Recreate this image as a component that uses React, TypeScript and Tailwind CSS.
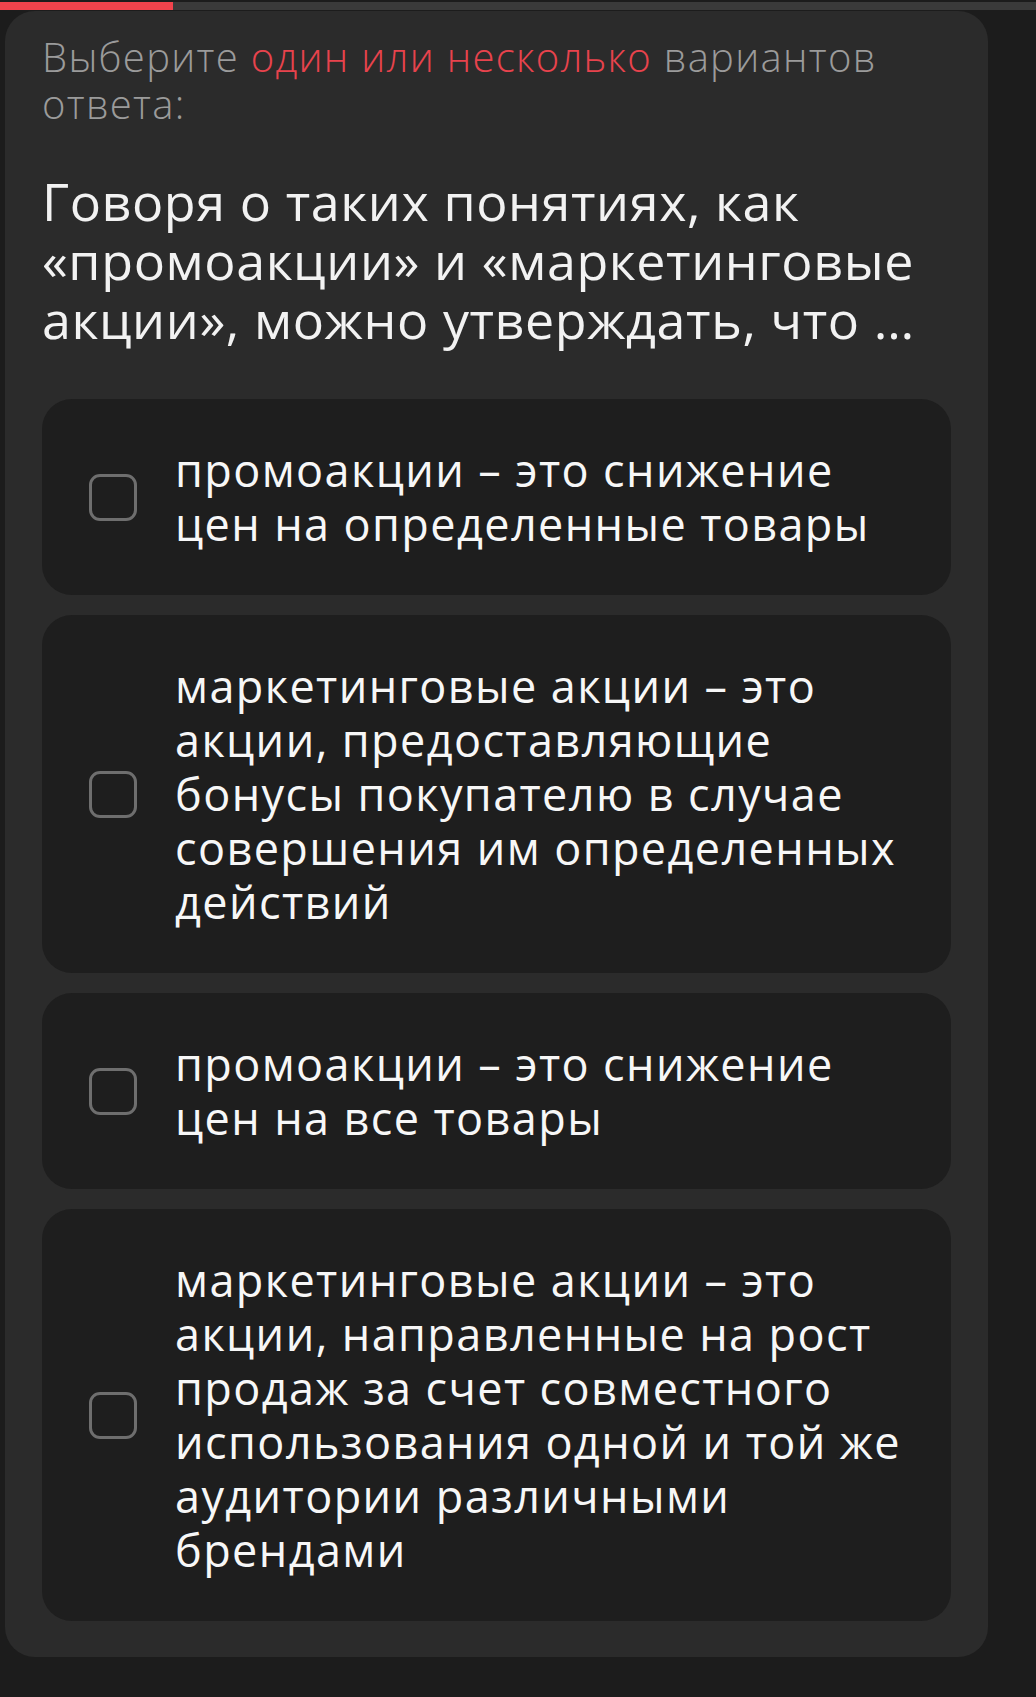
import React from 'react';

const options = [
  'промоакции – это снижение цен на определенные товары',
  'маркетинговые акции – это акции, предоставляющие бонусы покупателю в случае совершения им определенных действий',
  'промоакции – это снижение цен на все товары',
  'маркетинговые акции – это акции, направленные на рост продаж за счет совместного использования одной и той же аудитории различными брендами',
];

const App: React.FC = () => {
  return (
    <div className="min-h-[1697px] bg-[#1c1c1c] font-['Open_Sans',sans-serif]">
      {/* progress */}
      <div className="pt-[2px]">
        <div className="h-[8px] bg-[#3a3a3a]">
          <div className="h-full w-[173px] bg-[#f0434c]" />
        </div>
      </div>

      <div className="ml-[5px] mr-[48px] mt-[1px] rounded-[30px] bg-[#2b2b2b] px-[37px] pt-[22px] pb-[36px]">
        <p className="text-[40px] leading-[47px] font-light tracking-[1.3px] text-[#9b9b9b]">
          Выберите <span className="text-[#e8434d]">один или несколько</span> вариантов ответа:
        </p>

        <h1 className="mt-[44px] text-[52px] leading-[59px] font-medium tracking-[0.6px] text-[#f2f2f2]">
          Говоря о таких понятиях, как «промоакции» и «маркетинговые акции», можно утверждать, что …
        </h1>

        <div className="mt-[51px] flex flex-col gap-[20px]">
          {options.map((text, i) => (
            <label
              key={i}
              className="flex items-center rounded-[30px] bg-[#1e1e1e] py-[44px] pl-[47px] pr-[43px] cursor-pointer"
            >
              <span className="shrink-0 w-[48px] h-[47px] rounded-[11px] border-[3px] border-[#6e6e6e]" />
              <span className="ml-[38px] flex-1 text-[45px] leading-[54px] tracking-[1.4px] text-[#f7f7f7]">{text}</span>
            </label>
          ))}
        </div>
      </div>
    </div>
  );
};

export default App;
